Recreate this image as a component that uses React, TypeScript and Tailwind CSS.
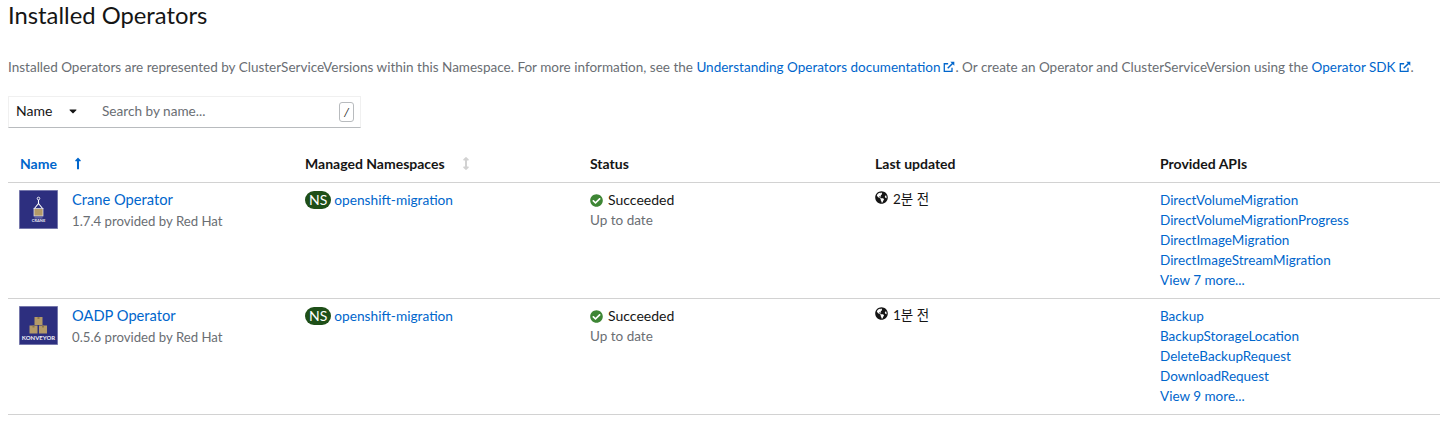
import { FaCheckCircle, FaGlobeAmericas, FaLongArrowAltUp, FaArrowsAltV, FaCaretDown } from 'react-icons/fa';

const font = "font-['Lato','Noto_Sans_CJK_KR',sans-serif]";

const ExternalIcon = () => (
  <svg viewBox="0 0 14 14" className="ml-[3px] inline-block h-[12px] w-[12px] align-[-1px] text-[#0066cc]" fill="none" stroke="currentColor">
    <path d="M10.5 8v4.2H1.5V3.2H6" strokeWidth="1.5" />
    <path d="M5.5 8.5 12 2" strokeWidth="1.8" />
    <path d="M8.5 0.8h4.7v4.7z" fill="currentColor" stroke="none" />
  </svg>
);

const CraneLogo = () => (
  <svg viewBox="0 0 39 39" className="h-[39px] w-[39px]">
    <rect x="0.25" y="0.25" width="38.5" height="38.5" fill="#2d2f7f" stroke="#8a8cb8" strokeWidth="0.5" />
    <circle cx="19.5" cy="8.5" r="1.3" fill="none" stroke="#fff" strokeWidth="0.9" />
    <path d="M19.5 10v3.5M19.5 13.5l-4.5 5.5M19.5 13.5l4.5 5.5" stroke="#fff" strokeWidth="1.1" fill="none" />
    <rect x="15" y="18.5" width="9" height="7.5" fill="#b49a68" stroke="#e8e8f2" strokeWidth="0.7" />
    <rect x="15.5" y="27.5" width="8" height="0.8" fill="#8f91c0" />
    <text x="19.5" y="32" textAnchor="middle" fontSize="4" fontWeight="700" fill="#e8e8f2" fontFamily="Lato, sans-serif">CRANE</text>
  </svg>
);

const Box = ({ x, y }: { x: number; y: number }) => (
  <g>
    <rect x={x} y={y} width="8" height="8" fill="#b49a68" />
    <rect x={x + 3} y={y} width="2" height="2" fill="#8d7749" />
  </g>
);

const KonveyorLogo = () => (
  <svg viewBox="0 0 39 39" className="h-[39px] w-[39px]">
    <rect x="0.25" y="0.25" width="38.5" height="38.5" fill="#2d2f7f" stroke="#8a8cb8" strokeWidth="0.5" />
    <Box x={15.5} y={11} />
    <Box x={10.5} y={19.5} />
    <Box x={20} y={19.5} />
    <text x="19.5" y="34" textAnchor="middle" fontSize="6" fontWeight="700" fill="#f0f0f6" fontFamily="Lato, sans-serif">KONVEYOR</text>
  </svg>
);

const rows = [
  {
    name: 'Crane Operator',
    version: '1.7.4 provided by Red Hat',
    logo: <CraneLogo />,
    updated: '2분 전',
    apis: ['DirectVolumeMigration', 'DirectVolumeMigrationProgress', 'DirectImageMigration', 'DirectImageStreamMigration', 'View 7 more...'],
  },
  {
    name: 'OADP Operator',
    version: '0.5.6 provided by Red Hat',
    logo: <KonveyorLogo />,
    updated: '1분 전',
    apis: ['Backup', 'BackupStorageLocation', 'DeleteBackupRequest', 'DownloadRequest', 'View 9 more...'],
  },
];

const App = () => {
  return (
    <div className={`h-[440px] w-[1440px] overflow-hidden bg-white pl-2 text-[#151515] ${font}`}>
      <h1 className="-mt-px pt-0 text-[23.8px] leading-[32px]">Installed Operators</h1>

      <p className="mt-[26px] whitespace-nowrap text-[13.53px] leading-[20px] text-[#6a6e73]">
        Installed Operators are represented by ClusterServiceVersions within this Namespace. For more information, see the{' '}
        <a className="text-[#0066cc]">Understanding Operators documentation<ExternalIcon /></a>. Or create an Operator and ClusterServiceVersion using the{' '}
        <a className="text-[#0066cc]">Operator SDK<ExternalIcon /></a>.
      </p>

      <div className="mt-[19px] flex h-[32px] w-[353px] text-[14px]">
        <div className="flex w-[86px] items-center justify-between border-t border-b border-l border-t-[#f0f0f0] border-l-[#f0f0f0] border-b-[#b8bbbe] pb-[3px] pl-[7px] pr-[16px]">
          <span>Name</span>
          <FaCaretDown className="h-[12px] w-[10px]" />
        </div>
        <div className="flex flex-1 items-center justify-between border-t border-r border-b border-t-[#f0f0f0] border-r-[#f0f0f0] border-b-[#b8bbbe] pl-2 pr-[6px]">
          <span className="-mt-[1px] text-[13.6px] text-[#6a6e73]">Search by name...</span>
          <span className="flex h-[20px] w-[15px] items-center justify-center rounded-[3px] border border-[#b8bbbe] text-[12px] italic leading-none">/</span>
        </div>
      </div>

      <div className="mt-[18px]">
        <div className="grid h-[37px] grid-cols-[297px_285px_285px_285px_1fr] items-center border-b border-[#d2d2d2] pb-[2px] text-[14px] font-bold">
          <div className="flex items-center pl-3 text-[#0066cc]">
            Name
            <FaLongArrowAltUp className="ml-[17px] h-[13px] w-[8px]" />
          </div>
          <div className="flex items-center">
            Managed Namespaces
            <FaArrowsAltV className="ml-[17px] h-[13px] w-[8px] text-[#d2d2d2]" />
          </div>
          <div>Status</div>
          <div>Last updated</div>
          <div>Provided APIs</div>
        </div>

        {rows.map((row) => (
          <div key={row.name} className="grid h-[116px] grid-cols-[297px_285px_285px_285px_1fr] border-b border-[#d2d2d2] pt-[7px] text-[13.5px] leading-[20px]">
            <div className="flex pl-[11px]">
              <div className="shrink-0">{row.logo}</div>
              <div className="-mt-px ml-[14px]">
                <div className="text-[14.7px] text-[#0066cc]">{row.name}</div>
                <div className="mt-[2px] text-[13.2px] text-[#6a6e73]">{row.version}</div>
              </div>
            </div>
            <div className="flex items-start">
              <span className="mt-[1px] flex h-[18px] items-center rounded-full bg-[#1e4f18] px-[4px] text-[14px] text-white">NS</span>
              <span className="ml-[3px] text-[13.7px] text-[#0066cc]">openshift-migration</span>
            </div>
            <div>
              <div className="flex items-center text-[14px]">
                <FaCheckCircle className="mr-[5px] h-[13px] w-[13px] text-[#3e8635]" />
                Succeeded
              </div>
              <div className="text-[#6a6e73]">Up to date</div>
            </div>
            <div className="-mt-px flex items-start">
              <FaGlobeAmericas className="mr-[5px] mt-[2px] h-[13px] w-[13px]" />
              {row.updated}
            </div>
            <div className="text-[#0066cc]">
              {row.apis.map((api) => (
                <div key={api}>{api}</div>
              ))}
            </div>
          </div>
        ))}
      </div>
    </div>
  );
};

export default App;
